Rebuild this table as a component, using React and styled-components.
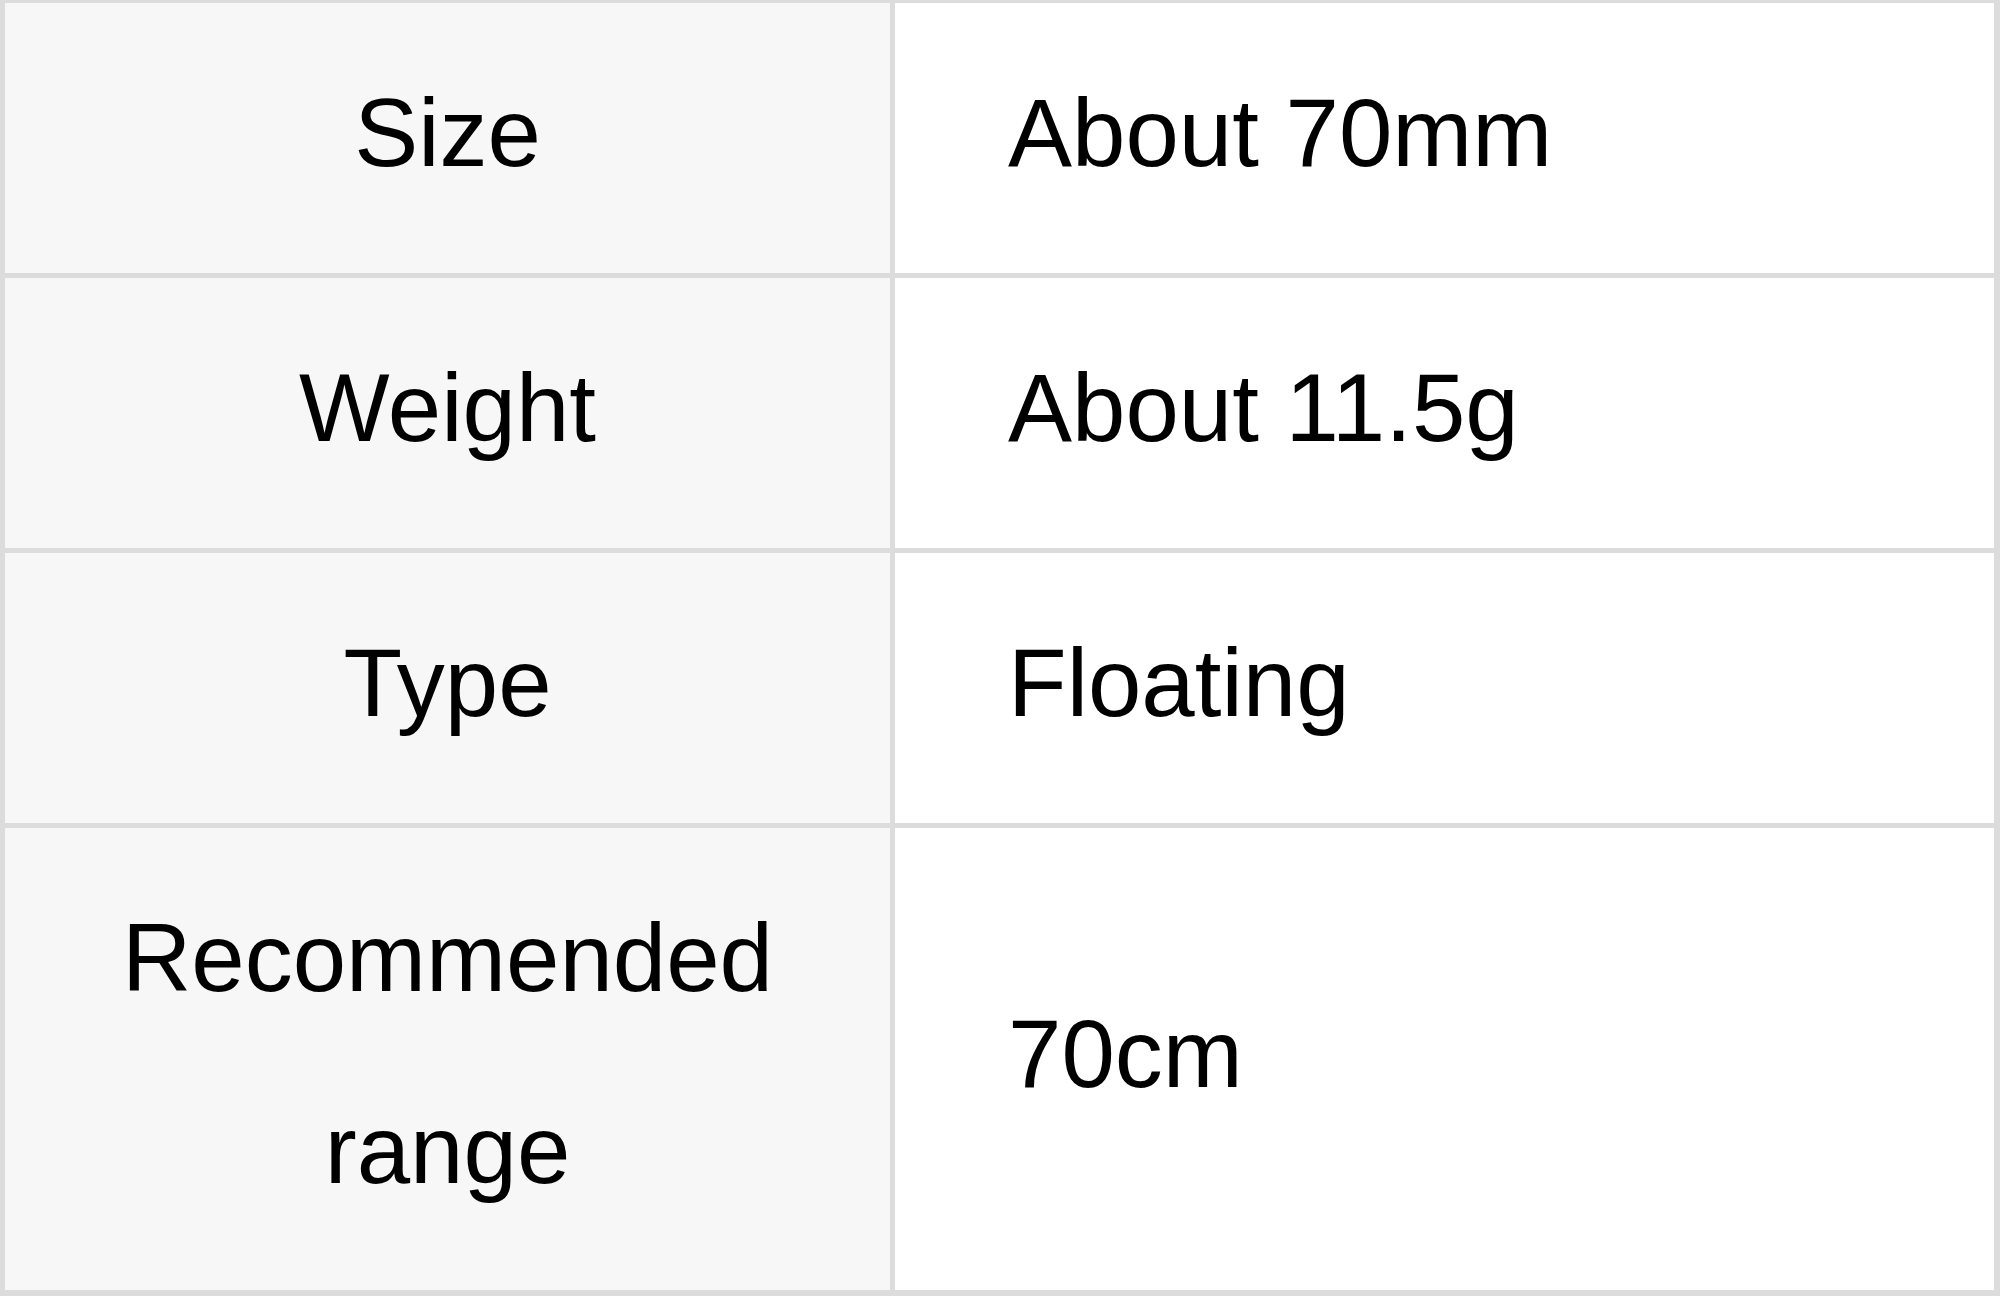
import React from "react";
import styled, { createGlobalStyle } from "styled-components";

const Global = createGlobalStyle`
  html, body { margin: 0; padding: 0; background: #ffffff; }
  body { font-family: "Liberation Sans", Arial, sans-serif; }
`;

const Table = styled.div`
  display: grid;
  grid-template-columns: 885px 1fr;
  gap: 5px;
  width: 2000px;
  box-sizing: border-box;
  padding: 3px 6px 8px 5px;
  background: #dcdcdc;
`;

const Cell = styled.div`
  display: flex;
  align-items: center;
  justify-content: ${(p) => (p.$label ? "center" : "flex-start")};
  text-align: ${(p) => (p.$label ? "center" : "left")};
  background: ${(p) => (p.$label ? "#f7f7f7" : "#ffffff")};
  color: #000000;
  font-family: "Liberation Sans", Arial, sans-serif;
  font-size: 96px;
  line-height: 192px;
  padding: ${(p) => (p.$label ? "34px 20px 44px" : "34px 20px 44px 113px")};
  min-height: ${(p) => p.$min || 0}px;
  box-sizing: border-box;
`;

const rows = [
  ["Size", "About 70mm"],
  ["Weight", "About 11.5g"],
  ["Type", "Floating"],
  ["Recommended range", "70cm"],
];

export default function App() {
  return (
    <>
      <Global />
      <Table>
        {rows.map(([k, v], i) => (
          <React.Fragment key={k}>
            <Cell $label $min={i === 0 ? 269 : 270}>{k}</Cell>
            <Cell $min={i === 0 ? 269 : 270}>{v}</Cell>
          </React.Fragment>
        ))}
      </Table>
    </>
  );
}
